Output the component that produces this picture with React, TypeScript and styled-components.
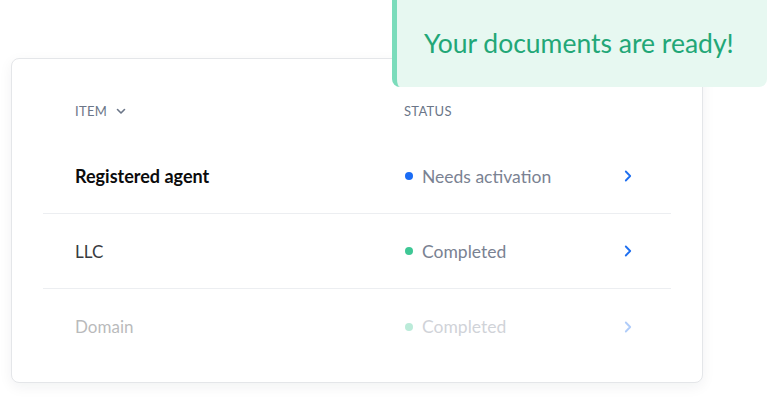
import React from 'react'
import styled, { createGlobalStyle } from 'styled-components'

const GlobalStyle = createGlobalStyle`
  html, body {
    margin: 0;
    padding: 0;
    background: #ffffff;
  }
  body {
    font-family: Lato, 'Open Sans', sans-serif;
  }
`

const Page = styled.div`
  position: relative;
  width: 768px;
  height: 402px;
  overflow: hidden;
  padding: 58px 0 0 11px;
  box-sizing: border-box;
`

const Card = styled.div`
  width: 692px;
  height: 325px;
  box-sizing: border-box;
  border: 1px solid #e4e6e9;
  border-radius: 8px;
  box-shadow: 0 4px 14px rgba(20, 30, 50, 0.06);
  padding: 39px 31px 0;
  background: #fff;
`

const HeaderRow = styled.div`
  display: grid;
  grid-template-columns: 329px 1fr;
  align-items: center;
  height: 26px;
  padding-left: 32px;
  margin-bottom: 15px;
`

const HeaderCell = styled.div`
  display: flex;
  align-items: center;
  gap: 9px;
  font-size: 13px;
  letter-spacing: 0.3px;
  color: #6b7688;
`

const Row = styled.div<{ faded?: boolean; last?: boolean }>`
  display: grid;
  grid-template-columns: 329px 1fr 20px;
  align-items: center;
  height: 75px;
  box-sizing: border-box;
  padding: 0 27px 0 32px;
  border-bottom: ${(p) => (p.last ? 'none' : '1px solid #eceef1')};
  opacity: ${(p) => (p.faded ? 0.35 : 1)};
`

const ItemName = styled.div<{ bold?: boolean }>`
  font-size: ${(p) => (p.bold ? 18 : 17)}px;
  font-weight: ${(p) => (p.bold ? 700 : 400)};
  color: ${(p) => (p.bold ? '#0b0b0c' : '#383b40')};
`

const Status = styled.div`
  display: flex;
  align-items: center;
  gap: 9px;
  font-size: 17.5px;
  color: #7a8292;
`

const Dot = styled.span<{ color: string }>`
  width: 8px;
  height: 8px;
  border-radius: 50%;
  background: ${(p) => p.color};
  margin-left: 1px;
`

const Toast = styled.div`
  position: absolute;
  top: 0;
  right: 1px;
  width: 375px;
  height: 87px;
  box-sizing: border-box;
  background: #e7f8f1;
  border-left: 5px solid #7bdcbb;
  border-radius: 0 0 8px 8px;
  padding: 27px 0 0 27px;
  font-size: 26.5px;
  color: #22a777;
`

function ChevronDown() {
  return (
    <svg width="10" height="7" viewBox="0 0 10 7" fill="none">
      <path d="M1.5 1.5 L5 5 L8.5 1.5" stroke="#6b7688" strokeWidth="1.6" strokeLinecap="round" strokeLinejoin="round" />
    </svg>
  )
}

function ChevronRight() {
  return (
    <svg width="8" height="12" viewBox="0 0 8 12" fill="none">
      <path d="M1.8 1.5 L6.2 6 L1.8 10.5" stroke="#1e6ff0" strokeWidth="1.8" strokeLinecap="round" strokeLinejoin="round" />
    </svg>
  )
}

const rows = [
  { name: 'Registered agent', status: 'Needs activation', dot: '#1a6cf5', bold: true },
  { name: 'LLC', status: 'Completed', dot: '#3ec795' },
  { name: 'Domain', status: 'Completed', dot: '#3ec795', faded: true },
]

export default function App() {
  return (
    <>
      <GlobalStyle />
      <Page>
        <Card>
          <HeaderRow>
            <HeaderCell>
              ITEM <ChevronDown />
            </HeaderCell>
            <HeaderCell>STATUS</HeaderCell>
          </HeaderRow>
          {rows.map((r, i) => (
            <Row key={r.name} faded={r.faded} last={i === rows.length - 1}>
              <ItemName bold={r.bold}>{r.name}</ItemName>
              <Status>
                <Dot color={r.dot} />
                {r.status}
              </Status>
              <ChevronRight />
            </Row>
          ))}
        </Card>
        <Toast>Your documents are ready!</Toast>
      </Page>
    </>
  )
}
